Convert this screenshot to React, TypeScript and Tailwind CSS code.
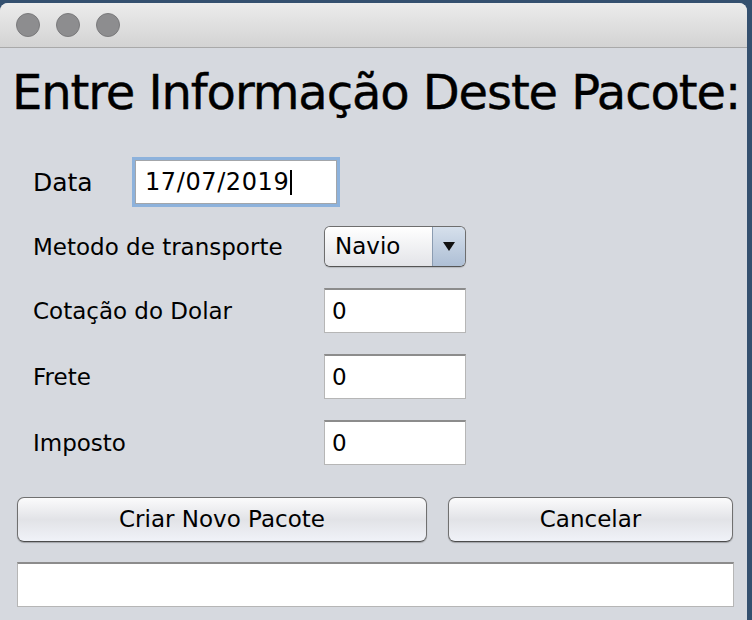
import { ReactNode } from 'react'

function Field({ value, className = '' }: { value: string; className?: string }) {
  return (
    <div
      className={`h-[45px] bg-white border border-[#b6b6b6] border-t-2 border-t-[#8c8c8c] flex items-center pl-[7px] text-[23px] text-black ${className}`}
    >
      {value}
    </div>
  )
}

function Row({ label, children, className = '' }: { label: string; children: ReactNode; className?: string }) {
  return (
    <div className={`flex items-center pl-[33px] ${className}`}>
      <div className="w-[291px] text-[23px] text-black pt-[2px]">{label}</div>
      {children}
    </div>
  )
}

function MacButton({ label, className = '' }: { label: string; className?: string }) {
  return (
    <button
      className={`h-[45px] rounded-[7px] border border-[#707070] border-b-[#4c4c4c] bg-linear-to-b from-[#fbfbfc] via-[#e2e3e7] to-[#f0f2f8] shadow-[0_1px_1px_rgba(0,0,0,0.25)] text-[23px] text-black ${className}`}
    >
      {label}
    </button>
  )
}

export default function App() {
  return (
    <div className="w-[752px] h-[620px] bg-[#34506f] pt-[3px] font-['DejaVu_Sans',sans-serif] overflow-hidden">
      <div className="w-[747px] h-[617px] rounded-t-[8px] bg-[#d6d9df] overflow-hidden">
        {/* title bar */}
        <div className="h-[45px] border-b border-[#a9a9a9] bg-linear-to-b from-[#ececec] to-[#d3d3d3] flex items-center pl-[16px] gap-[16px]">
          <span className="w-[24px] h-[24px] rounded-full bg-[#8d8d8f] border border-[#7a7a7c]" />
          <span className="w-[24px] h-[24px] rounded-full bg-[#8d8d8f] border border-[#7a7a7c]" />
          <span className="w-[24px] h-[24px] rounded-full bg-[#8d8d8f] border border-[#7a7a7c]" />
        </div>

        {/* heading */}
        <h1 className="mt-[16px] pl-[12px] text-[48px] leading-[56px] tracking-[-1.1px] text-black whitespace-nowrap [-webkit-text-stroke:0.4px_black]">
          Entre Informação Deste Pacote:
        </h1>

        {/* Data */}
        <div className="mt-[37px] h-[50px] flex items-center pl-[33px]">
          <div className="w-[99px] text-[25px] text-black pt-[2px]">Data</div>
          <div className="w-[208px] h-[50px] border-[3px] border-[#8db2dc] bg-white shadow-[inset_0_0_0_1px_#a3a6aa] flex items-center pl-[10px] text-[24px] tracking-[0.6px] text-black">
            17/07/2019
            <span className="inline-block w-[2px] h-[25px] bg-black ml-[1px]" />
          </div>
        </div>

        {/* combo */}
        <Row label="Metodo de transporte" className="mt-[19px] h-[41px]">
          <div className="w-[142px] h-[41px] rounded-[6px] border border-[#6e6e6e] border-b-[#555] flex overflow-hidden shadow-[0_1px_1px_rgba(0,0,0,0.15)]">
            <div className="flex-1 bg-linear-to-b from-[#ffffff] to-[#e3e4e8] flex items-center pl-[10px] text-[23px] text-black">
              Navio
            </div>
            <div className="w-[33px] border-l border-[#8b9cb1] bg-linear-to-b from-[#d6e0ec] to-[#aebfd5] flex items-center justify-center">
              <svg width="14" height="11" viewBox="0 0 14 11">
                <polygon points="1,1 13,1 7,10" fill="#111" />
              </svg>
            </div>
          </div>
        </Row>

        <Row label="Cotação do Dolar" className="mt-[21px] h-[45px]">
          <Field value="0" className="w-[142px]" />
        </Row>
        <Row label="Frete" className="mt-[21px] h-[45px]">
          <Field value="0" className="w-[142px]" />
        </Row>
        <Row label="Imposto" className="mt-[21px] h-[45px]">
          <Field value="0" className="w-[142px]" />
        </Row>

        {/* buttons */}
        <div className="mt-[32px] flex pl-[17px] gap-[21px]">
          <MacButton label="Criar Novo Pacote" className="w-[410px]" />
          <MacButton label="Cancelar" className="w-[285px]" />
        </div>

        {/* status */}
        <div className="mt-[20px] pl-[17px]">
          <Field value="" className="w-[717px]" />
        </div>
      </div>
    </div>
  )
}
